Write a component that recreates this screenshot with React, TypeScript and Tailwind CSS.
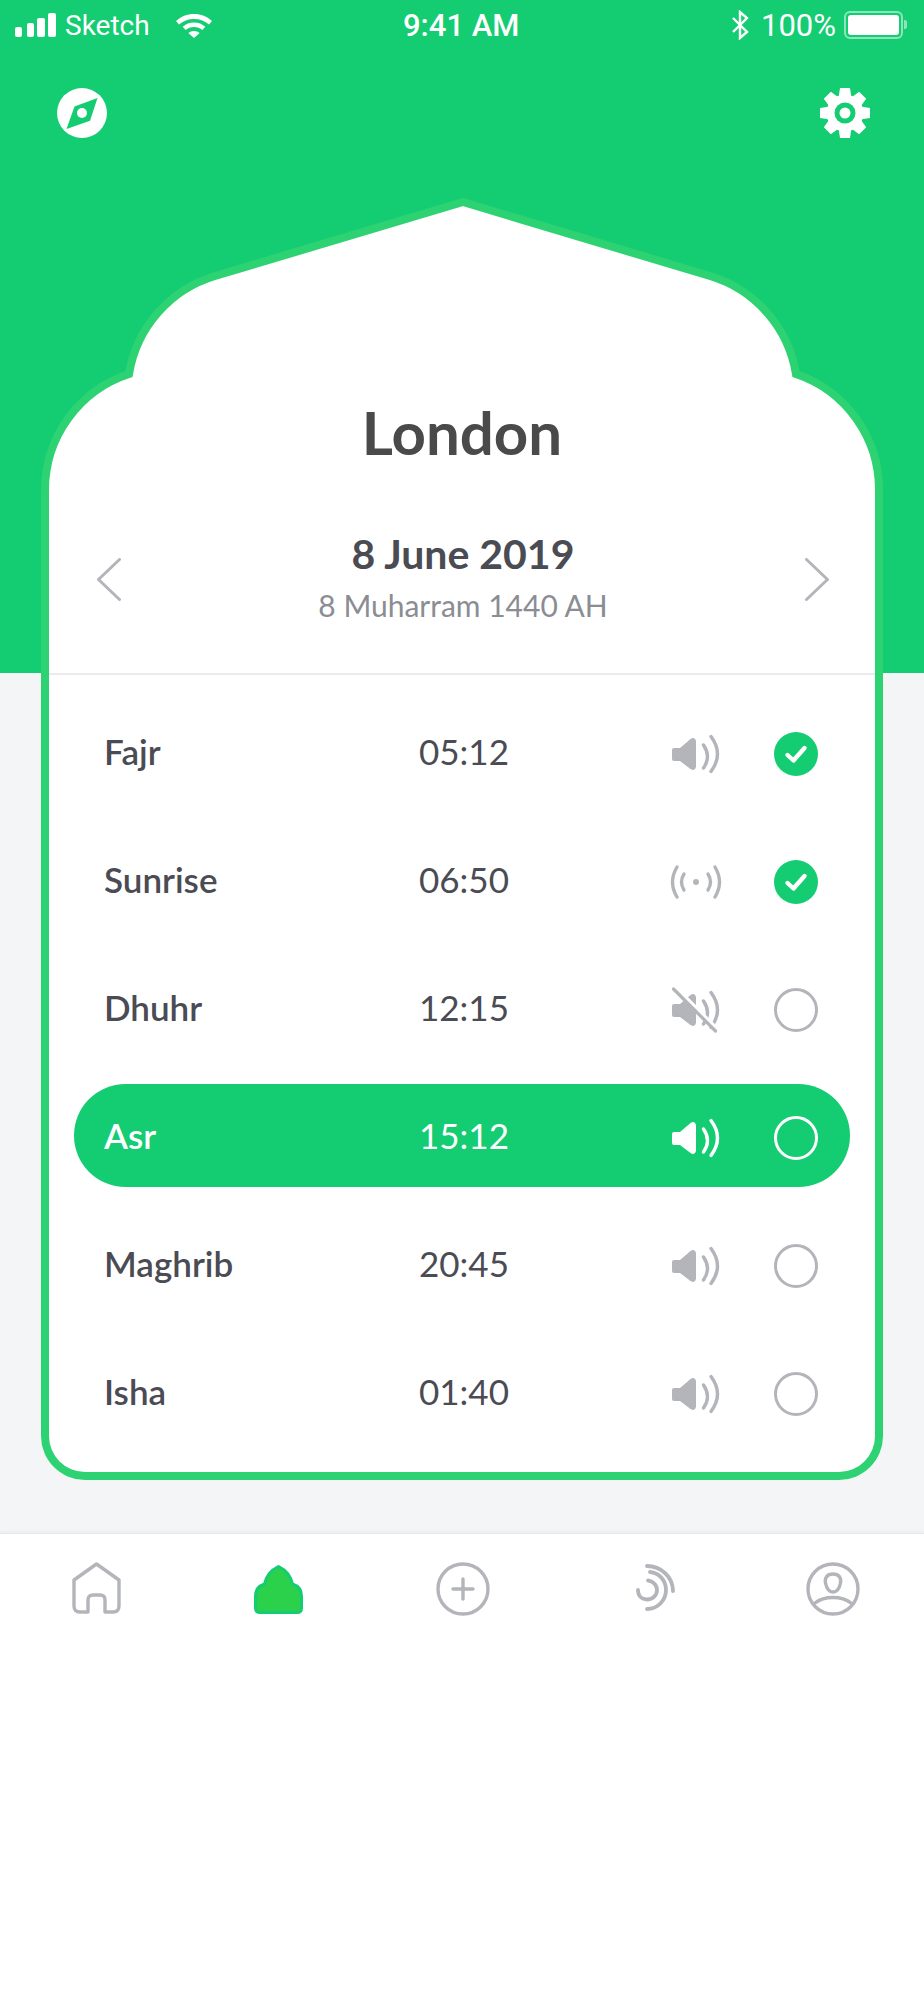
const GREEN = '#14cc72';
const GRAY = '#b3b5ba';

const prayers = [
  { name: 'Fajr', time: '05:12', sound: 'on', done: true },
  { name: 'Sunrise', time: '06:50', sound: 'vibrate', done: true },
  { name: 'Dhuhr', time: '12:15', sound: 'off', done: false },
  { name: 'Asr', time: '15:12', sound: 'on', done: false, active: true },
  { name: 'Maghrib', time: '20:45', sound: 'on', done: false },
  { name: 'Isha', time: '01:40', sound: 'on', done: false },
];

function StatusBar() {
  return (
    <div className="flex h-[50px] items-start pl-[15px] pt-[13px] font-['Roboto',sans-serif] text-[28px] leading-[25px] text-white">
      <svg width="41" height="24" viewBox="0 0 41 24" fill="white">
        <rect x="0" y="14" width="7" height="10" rx="2" />
        <rect x="12" y="10" width="7" height="14" rx="2" />
        <rect x="22" y="5" width="8" height="19" rx="2" />
        <rect x="33" y="0" width="8" height="24" rx="2" />
      </svg>
      <span className="ml-[9px] w-[111px]">Sketch</span>
      <svg width="36" height="24" viewBox="0 0 36 24" fill="white" className="mt-[1px]">
        <path d="M18 0C11 0 5 2.600 0 7l3 3.500C7 7 12 5 18 5s11 2 15 5.500L36 7C31 2.600 25 0 18 0z" />
        <path d="M18 8.500c-4.400 0-8.300 1.600-11.300 4.200l3 3.400c2.200-1.800 5-3 8.300-3s6.100 1.200 8.300 3l3-3.400C26.300 10.100 22.400 8.500 18 8.500z" />
        <path d="M18 17c-2.200 0-4.200 .8-5.700 2L18 24l5.700-5c-1.500-1.200-3.500-2-5.700-2z" />
      </svg>
      <span className="ml-[191px] w-[118px] whitespace-nowrap text-[31px] font-medium">9:41 AM</span>
      <svg width="18" height="30" viewBox="0 0 18 30" fill="none" stroke="white" strokeWidth="2.400" className="ml-[210px] -mt-[3px]">
        <path d="M2 8l14 14-7 6V2l7 6L2 22" />
      </svg>
      <span className="ml-[12px] w-[83px] whitespace-nowrap text-[31px]">100%</span>
      <div className="-mt-[2px] h-[28px] w-[59px] rounded-[6px] border-2 border-white/50 p-[2px]">
        <div className="h-full w-full rounded-[3px] bg-white" />
      </div>
      <div className="mt-[7px] ml-[1px] h-[9px] w-[3px] rounded-r-[2px] bg-white/50" />
    </div>
  );
}

function CompassIcon() {
  return (
    <svg width="50" height="50" viewBox="0 0 50 50">
      <circle cx="25" cy="25" r="25" fill="white" />
      <path d="M40.500 10 L33 32.700 L9.500 41 L17.500 18.500 Z" fill={GREEN} />
      <circle cx="25" cy="25" r="5" fill="white" />
    </svg>
  );
}

function GearIcon() {
  const teeth = [0, 45, 90, 135, 180, 225, 270, 315];
  return (
    <svg width="50" height="50" viewBox="0 0 50 50">
      {teeth.map((a) => (
        <path key={a} d="M20 0 H30 L31.500 10 H18.500 Z" fill="white" transform={`rotate(${a} 25 25)`} />
      ))}
      <circle cx="25" cy="25" r="18.500" fill="white" />
      <circle cx="25" cy="25" r="10.500" fill={GREEN} />
      <circle cx="25" cy="25" r="5.500" fill="white" />
    </svg>
  );
}

function Arch() {
  return (
    <svg className="absolute left-0 top-0" width="842" height="296" viewBox="41 198 842 296">
      <path
        d="M45 494 V490 A122 122 0 0 1 129 374 A123 123 0 0 1 215 276 L463 202 L710 276 A123 123 0 0 1 796 374 A122 122 0 0 1 879 490 V494"
        fill="white"
        stroke="#2dd272"
        strokeWidth="8"
      />
    </svg>
  );
}

function Speaker({ color }: { color: string }) {
  return (
    <>
      <path
        d="M2 13 H8 L18.500 4 Q23 1.500 24 6 V32 Q23 36.500 18.500 34 L8 26 H2 Q0 26 0 24 V15 Q0 13 2 13 Z"
        fill={color}
      />
      <path d="M31.500 10 Q39.500 21.500 31.500 33" stroke={color} strokeWidth="3.400" strokeLinecap="round" fill="none" />
      <path d="M39 1.500 Q52 19 39 36.500" stroke={color} strokeWidth="3.400" strokeLinecap="round" fill="none" />
    </>
  );
}

function SoundIcon({ sound, color }: { sound: string; color: string }) {
  if (sound === 'vibrate') {
    return (
      <svg width="54" height="34" viewBox="0 0 54 34" fill="none" stroke={color} strokeWidth="3.400" strokeLinecap="round" className="-ml-[3px]">
        <path d="M8 2 Q-1 17 8 32" />
        <path d="M46 2 Q55 17 46 32" />
        <path d="M15 9 Q10 17 15 25" />
        <path d="M39 9 Q44 17 39 25" />
        <circle cx="27" cy="17" r="3" fill={color} stroke="none" />
      </svg>
    );
  }
  return (
    <svg width="47" height="38" viewBox="0 0 47 38" className="overflow-visible">
      <Speaker color={color} />
      {sound === 'off' && (
        <>
          <path d="M4 -3 L46 39" stroke="white" strokeWidth="4" />
          <path d="M1.500 -2 L43.500 40" stroke={color} strokeWidth="3.200" strokeLinecap="round" />
        </>
      )}
    </svg>
  );
}

function CheckMark({ done, color }: { done: boolean; color: string }) {
  if (!done) {
    return <div className="h-[44px] w-[44px] rounded-full border-[3px]" style={{ borderColor: color }} />;
  }
  return (
    <svg width="44" height="44" viewBox="0 0 44 44">
      <circle cx="22" cy="22" r="22" fill={GREEN} />
      <path d="M13.500 23 L19.500 28.500 L30.500 16" fill="none" stroke="white" strokeWidth="4.400" strokeLinecap="round" strokeLinejoin="round" />
    </svg>
  );
}

function NavBar() {
  return (
    <div className="flex border-t border-[#e6e7ea] bg-white pl-[72px] pt-[28px] shadow-[0_-2px_3px_rgba(0,0,0,0.03)]">
      <svg width="49" height="52" viewBox="0 0 49 52" fill="none" stroke={GRAY} strokeWidth="3.400" strokeLinejoin="round" strokeLinecap="round">
        <path d="M24.500 2 L47 18 V44 Q47 50 41 50 H33 V38 Q33 33 28 33 H21 Q16 33 16 38 V50 H8 Q2 50 2 44 V18 Z" />
      </svg>
      <svg width="49" height="49" viewBox="0 0 49 49" className="ml-[133px] mt-[3px]">
        <path
          d="M24.500 1.500 Q36 7 38.500 19 Q47.500 22 47.500 31 V43 Q47.500 47.500 43 47.500 H6 Q1.500 47.500 1.500 43 V31 Q1.500 22 10.500 19 Q13 7 24.500 1.500 Z"
          fill="#2bd14a"
          stroke={GREEN}
          strokeWidth="3"
          strokeLinejoin="round"
        />
      </svg>
      <svg width="54" height="54" viewBox="0 0 54 54" fill="none" stroke={GRAY} strokeWidth="3.400" strokeLinecap="round" className="ml-[133px]">
        <circle cx="27" cy="27" r="25" />
        <path d="M27 17 V37 M17 27 H37" />
      </svg>
      <svg width="39" height="47" viewBox="0 0 39 47" fill="none" stroke={GRAY} strokeWidth="3.800" strokeLinecap="round" className="ml-[146px] mt-[2px]">
        <path d="M11 2 C25 2 37 13 37 27" />
        <path d="M11 45 C22 45 30 36 30 26 C30 16 23 9 14 8" />
        <path d="M2 26 C2 32 6 35.500 11 35.500 C17 35.500 21 31 21 26 C21 21 17 17 12 16.500" />
      </svg>
      <svg width="54" height="54" viewBox="0 0 54 54" fill="none" stroke={GRAY} strokeWidth="3.400" strokeLinecap="round" className="ml-[131px]">
        <circle cx="27" cy="27" r="25" />
        <path d="M27 12 C21 12 18.500 16 19.500 21 C20.500 26 22 30 27 30 C32 30 33.500 26 34.500 21 C35.500 16 33 12 27 12 Z" />
        <path d="M9 41 C14 37 21 35.500 27 35.500 C33 35.500 40 37 45 41" />
      </svg>
    </div>
  );
}

export default function App() {
  return (
    <div className="min-h-[2000px] w-[924px] bg-white font-['Lato',sans-serif] text-[#4a4b53]">
      <div className="h-[1533px] bg-[linear-gradient(#14cc72_673px,#f4f5f7_673px)]">
        <StatusBar />

        <div className="flex justify-between pl-[57px] pr-[54px] pt-[38px]">
          <CompassIcon />
          <GearIcon />
        </div>

        {/* Card */}
        <div className="mx-[41px] mt-[60px]">
          <div className="relative flex h-[292px] items-start justify-center pt-[200px]">
            <Arch />
            <h1 className="relative text-[60px] font-bold leading-[68px] text-[#4a4a4a]">London</h1>
          </div>

          <div className="rounded-b-[44px] border-x-8 border-b-8 border-[#2dd272] bg-white pb-[29px]">
            <div className="flex h-[185px] items-start justify-between border-b-2 border-[#e9ebef] pl-[48px] pr-[46px] pt-[68px]">
              <svg width="24" height="43" viewBox="0 0 24 43" fill="none" stroke={GRAY} strokeWidth="3" strokeLinecap="round" strokeLinejoin="round">
                <path d="M22.500 1.500 L1.500 21.500 L22.500 41.500" />
              </svg>
              <div className="-mt-[26px] text-center">
                <div className="text-[41px] font-bold leading-[44px] text-[#4a4b53]">8 June 2019</div>
                <div className="mt-[12px] text-[30px] leading-[34px] text-[#8a8d93]">8 Muharram 1440 AH</div>
              </div>
              <svg width="24" height="43" viewBox="0 0 24 43" fill="none" stroke={GRAY} strokeWidth="3" strokeLinecap="round" strokeLinejoin="round">
                <path d="M1.500 1.500 L22.500 21.500 L1.500 41.500" />
              </svg>
            </div>

            <div className="mx-[25px] mt-[25px] flex flex-col gap-[25px]">
              {prayers.map((p) => {
                const color = p.active ? '#ffffff' : GRAY;
                return (
                  <div
                    key={p.name}
                    className={
                      p.active
                        ? 'flex h-[103px] items-center rounded-[52px] bg-[#14cc72] pl-[30px] pt-[5px] text-white'
                        : 'flex h-[103px] items-center pl-[30px] pt-[5px]'
                    }
                  >
                    <div className="-mt-[7px] w-[300px] text-[35px] font-semibold leading-[40px]">{p.name}</div>
                    <div className="-mt-[7px] w-[120px] text-center text-[35px] leading-[40px]">{p.time}</div>
                    <div className="ml-[148px] w-[47px]">
                      <SoundIcon sound={p.sound} color={color} />
                    </div>
                    <div className="ml-[55px]">
                      <CheckMark done={p.done} color={color} />
                    </div>
                  </div>
                );
              })}
            </div>
          </div>
        </div>
      </div>

      <NavBar />
    </div>
  );
}
